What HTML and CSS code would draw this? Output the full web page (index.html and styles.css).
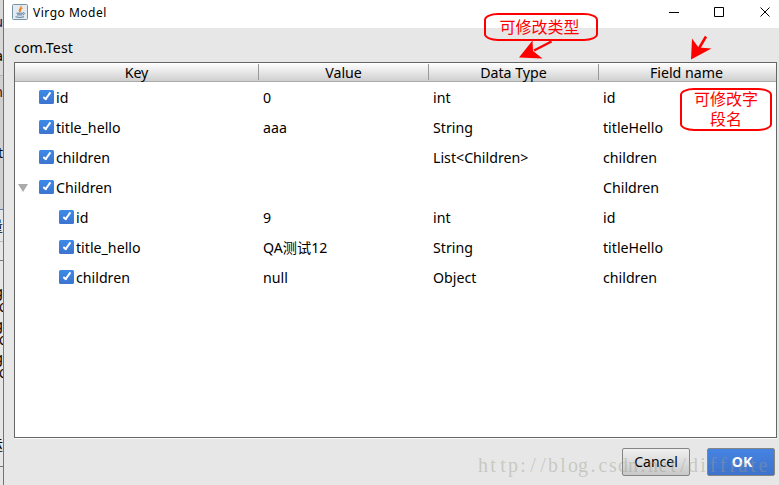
FILE: index.html
```html
<!DOCTYPE html>
<html lang="en">
<head>
<meta charset="UTF-8">
<title>Virgo Model</title>
<link rel="stylesheet" href="styles.css">
</head>
<body>
<div class="behind">
    <span class="bit t1">u</span>
    <span class="bit t2">a</span>
    <span class="bit t3">n</span>
    <span class="bit t4">t</span>
    <span class="bit t5">量</span>
    <span class="bit t6">g</span>
    <span class="bit left t7">C</span>
    <span class="bit t8">g</span>
    <span class="bit left t9">C</span>
    <span class="bit t10">g</span>
    <span class="bit left t11">C</span>
    <span class="bit t12">运</span>
</div>
<div class="window">
    <div class="titlebar">
        <svg class="java" width="16" height="16" viewBox="0 0 16 16">
            <rect x="0.5" y="0.5" width="15" height="15" rx="1" fill="#e3ebf1" stroke="#7892a5"/>
            <path d="M9 2C10 4 5.800 5 7.600 8M10.500 4C8 5.500 8 6.300 8.800 7.600" fill="none" stroke="#f08322" stroke-width="1.300"/>
            <path d="M4.500 9.200h6.500M5 10.900h5.200M3.500 12.800q4.500 1.300 8.500 0M11 8.700q3.200.2-.2 2.500" fill="none" stroke="#55799b"/>
        </svg>
        <span class="title">Virgo Model</span>
        <svg class="controls" width="104" height="12" viewBox="0 0 104 12">
            <path d="M0 6.500h10M45.500 1.500h9v9h-9zM91.500 1.500l9 9M100.500 1.500l-9 9" fill="none" stroke="#000"/>
        </svg>
    </div>
    <div class="content">
        <div class="path">com.Test</div>
        <div class="table">
            <div class="row head">
                <span>Key</span><span>Value</span><span>Data Type</span><span>Field name</span>
            </div>
            <div class="row">
                <div class="key"><i class="check"></i>id</div><div>0</div><div>int</div><div>id</div>
            </div>
            <div class="row">
                <div class="key"><i class="check"></i>title_hello</div><div>aaa</div><div>String</div><div>titleHello</div>
            </div>
            <div class="row">
                <div class="key"><i class="check"></i>children</div><div></div><div>List&lt;Children&gt;</div><div>children</div>
            </div>
            <div class="row">
                <div class="key parent"><i class="arrow"></i><i class="check"></i>Children</div><div></div><div></div><div>Children</div>
            </div>
            <div class="row">
                <div class="key child"><i class="check"></i>id</div><div>9</div><div>int</div><div>id</div>
            </div>
            <div class="row">
                <div class="key child"><i class="check"></i>title_hello</div><div>QA测试12</div><div>String</div><div>titleHello</div>
            </div>
            <div class="row">
                <div class="key child"><i class="check"></i>children</div><div>null</div><div>Object</div><div>children</div>
            </div>
        </div>
        <div class="buttons">
            <button type="button" class="btn">Cancel</button>
            <button type="button" class="btn ok">OK</button>
        </div>
    </div>
</div>
<div class="note note-type">可修改类型</div>
<div class="note note-name">可修改字<br>段名</div>
<svg class="arrows" width="220" height="30" viewBox="0 0 220 30">
    <path d="M32.500 6.500L15 15.500" stroke="#f00" stroke-width="2.500" fill="none"/>
    <path d="M0 22.500L13.500 5.500L14 16L23.500 23.500Z" fill="#f00"/>
    <path d="M187 1.500L179 15" stroke="#f00" stroke-width="2.500" fill="none"/>
    <path d="M172 24.500L173 3.500L179.500 12.500L192.500 13.500Z" fill="#f00"/>
</svg>
<svg class="watermark" width="294" height="30" viewBox="0 0 294 30">
    <text y="20" x="6 16 26 36 46 56 66 76 86 96 106 116 126 136 146 156 166 176 186 196 206 216 226 236 246 256 266 276 286">http://blog.csdn.net/diffrate</text>
</svg>
</body>
</html>
```

FILE: styles.css
```css
body {
    margin: 0;
    width: 779px;
    height: 485px;
    overflow: hidden;
    position: relative;
    display: flex;
    background: #dcdcdc;
    font-family: "Noto Sans", "Noto Sans CJK SC", sans-serif;
    font-size: 14.2px;
    color: #000;
}
.behind {
    width: 3px;
    height: 485px;
    overflow: hidden;
    position: relative;
    background: linear-gradient(#d8d8d8 0, #d8d8d8 75px, #b5b5b5 75px, #b5b5b5 76px, #d0d0d0 76px, #d0d0d0 209px, #5b7cab 209px, #5b7cab 210px, #e6e6e6 210px, #e6e6e6 241px, #bbb 241px, #bbb 242px, #e6e6e6 242px, #e6e6e6 260px, #777 260px, #777 261px, #e6e6e6 261px, #e6e6e6 466px, #777 466px, #777 467px, #e6e6e6 467px);
}
.bit {
    position: absolute;
    right: 0;
    line-height: 16px;
}
.bit.left {
    left: -1px;
    right: auto;
    font-size: 12px;
}
.t1 { top: 14px; color: #002060; }
.t2 { top: 48px; }
.t3 { top: 84px; color: #600; }
.t4 { top: 145px; }
.t5 { top: 218px; }
.t6 { top: 284px; }
.t7 { top: 300px; }
.t8 { top: 317px; }
.t9 { top: 333px; }
.t10 { top: 350px; }
.t11 { top: 366px; }
.t12 { top: 437px; }
.window {
    flex: 1;
    border-left: 1px solid #4a7ab8;
    background: #e7e7e7;
}
.titlebar {
    height: 28px;
    background: #fff;
    display: flex;
    align-items: center;
    padding: 0 6px 0 8px;
    box-sizing: border-box;
}
.java {
    margin-top: -4px;
}
.title {
    flex: 1;
    margin: -3px 0 0 5px;
    font-size: 12px;
    letter-spacing: 0.5px;
}
.controls {
    margin: -4px 0 0;
}
.content {
    padding: 0 2px 0 10px;
}
.path {
    height: 34px;
    line-height: 40px;
    letter-spacing: 0.1px;
}
.table {
    height: 376px;
    box-sizing: border-box;
    background: #fff;
    border: 1px solid #666;
    box-shadow: 0 1px #fafafa;
}
.row {
    display: grid;
    grid-template-columns: 244px 170px 170px 1fr;
    height: 30px;
    line-height: 32px;
}
.row > div {
    padding-left: 4px;
    white-space: nowrap;
}
.row.head {
    height: 19px;
    background: linear-gradient(#fff, #cfcfcf);
    border-bottom: 1px solid #aaa;
    box-sizing: border-box;
    text-align: center;
}
.head span {
    height: 16px;
    margin-top: 1px;
    line-height: 17px;
    border-right: 1px solid #999;
}
.head span:last-child {
    border-right: 0;
    padding-right: 2px;
}
.row .key {
    display: flex;
    align-items: flex-start;
    padding-left: 24px;
}
.row .parent {
    padding-left: 3px;
}
.row .child {
    padding-left: 44px;
}
.check {
    width: 15px;
    height: 14px;
    margin: 8px 2px 0 0;
    border-radius: 1.5px;
    background: linear-gradient(#3c8ae8, #3d74cf);
    position: relative;
}
.check::after {
    content: "";
    position: absolute;
    left: 6px;
    top: 1px;
    width: 2px;
    height: 7px;
    border: solid #fff;
    border-width: 0 2px 2px 0;
    transform: rotate(36deg);
}
.arrow {
    border: 5px solid transparent;
    border-top: 8px solid #aaa;
    border-bottom: 0;
    margin: 12px 11px 0 0;
}
.buttons {
    display: flex;
    justify-content: flex-end;
    gap: 17px;
    padding: 10px 2px 0 0;
}
.btn {
    width: 68px;
    height: 28px;
    padding: 0 0 2px;
    border: 1px solid #858585;
    border-radius: 2px;
    background: linear-gradient(#f0f0f0, #c8c8c8);
    font: 14px "Noto Sans", sans-serif;
    color: #000;
}
.btn.ok {
    background: linear-gradient(#4583e2, #3f73cb);
    color: #fff;
    font-weight: bold;
    padding-left: 2px;
}
.note {
    position: absolute;
    box-sizing: border-box;
    border: 2px solid #f00;
    border-radius: 14px / 7px;
    color: #f00;
    font-family: "Noto Sans CJK SC", sans-serif;
    font-size: 16px;
    font-weight: 400;
    text-align: center;
}
.note-type {
    left: 484px;
    top: 13px;
    width: 114px;
    height: 28px;
    line-height: 23px;
    padding-right: 3px;
}
.note-name {
    left: 680px;
    top: 88px;
    width: 92px;
    height: 43px;
    line-height: 20px;
}
.note-name::before {
    content: "";
    display: block;
    margin-top: -2px;
}
.arrows {
    position: absolute;
    left: 519px;
    top: 35px;
}
.watermark {
    position: absolute;
    left: 477px;
    top: 452px;
}
.watermark text {
    font: 20px "Liberation Serif", serif;
    text-anchor: middle;
    fill: rgba(155, 155, 140, 0.42);
}
```
